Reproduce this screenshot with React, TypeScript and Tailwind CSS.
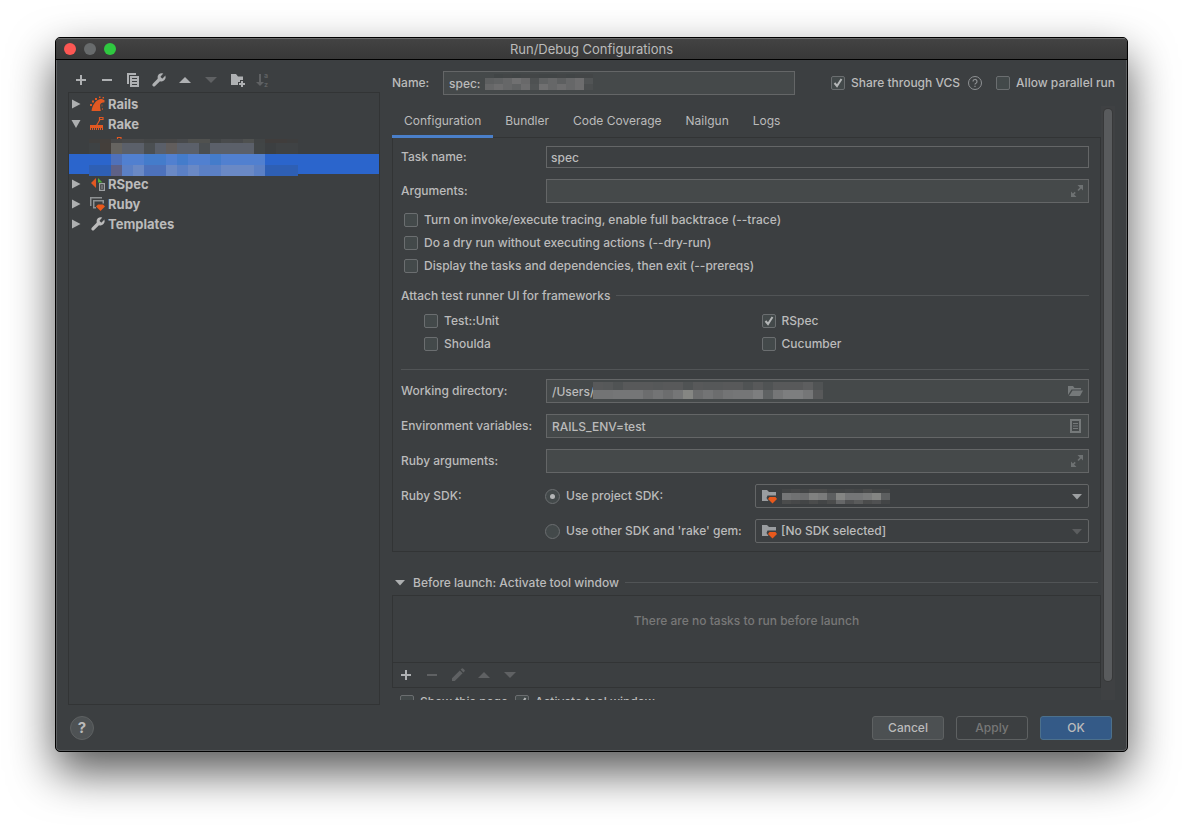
import React from "react";

type IconProps = { className?: string };

const Icon = ({ className = "", children }: IconProps & { children: React.ReactNode }) => (
  <svg viewBox="0 0 16 16" className={`size-4 shrink-0 overflow-visible ${className}`} fill="currentColor" aria-hidden="true">
    {children}
  </svg>
);

/* Toolbar icons */
const PlusIcon = () => (
  <Icon>
    <path d="M7 3h2v4h4v2H9v4H7V9H3V7h4z" />
  </Icon>
);

const MinusIcon = () => (
  <Icon>
    <path d="M3 7h10v2H3z" />
  </Icon>
);

const CopyIcon = () => (
  <Icon>
    <path d="M2 1h9v2H4v9H2z" />
    <path fillRule="evenodd" d="M5 4h9v11H5zM7 6v1h5V6zM7 9v1h5V9zM7 12v1h5v-1z" />
  </Icon>
);

const WrenchIcon = () => (
  <svg viewBox="0 0 24 24" className="size-4 shrink-0" fill="currentColor" aria-hidden="true">
    <path d="M14.7 6.3a1 1 0 0 0 0 1.4l1.6 1.6a1 1 0 0 0 1.4 0l3.9-3.9a6.4 6.4 0 0 1-8.1 8.3l-7.3 7.3a2.4 2.4 0 0 1-3.5-3.5l7.3-7.3a6.4 6.4 0 0 1 8.5-7.9z" />
  </svg>
);

const UpIcon = () => (
  <Icon>
    <path d="M2 11l6-6 6 6z" />
  </Icon>
);

const DownIcon = () => (
  <Icon>
    <path d="M2 5h12l-6 6z" />
  </Icon>
);

const NewFolderIcon = () => (
  <Icon>
    <path d="M2 2h5l2 2.500h5V8h-3v2H9v3H2z" />
    <path d="M12 9h2v2h2v2h-2v2h-2v-2h-2v-2h2z" />
  </Icon>
);

const SortIcon = () => (
  <Icon>
    <path d="M4 2h2v8h3l-4 4-4-4h3z" />
    <text x="9" y="6" fontSize="7" fontWeight="700" fontFamily="Inter, sans-serif">a</text>
    <text x="9" y="15" fontSize="7" fontWeight="700" fontFamily="Inter, sans-serif">z</text>
  </Icon>
);

const PencilIcon = () => (
  <Icon>
    <path d="M2 11.200L9.800 3.400l2.800 2.800L4.800 14H2zM10.600 2.600l1.200-1.200q.6-.5 1.200 0l1.600 1.600q.5.6 0 1.200l-1.200 1.200z" />
  </Icon>
);

/* Tree icons */
const RailsIcon = () => (
  <Icon className="text-[#e25822]">
    <path d="M1.500 15C2.500 9 5.500 4.500 9.500 3.200c2-.6 4 .2 5.200 1.300l-.4 2c-2-.4-3.900.3-4.200 2.500-.2 2 .2 4 .8 6z" />
    <path d="M0 8h2v2H0zM2 4.500h2v2H2zM5 2h2v2H5zM9 .5h1.500V2H9zM12.500 1H14v1.500h-1.500z" />
    <path d="M11.500 8.500h1v2h-1zM12 12h1v2h-1z" opacity=".6" />
  </Icon>
);

const RakeIcon = () => (
  <Icon className="text-[#e25822]">
    <path d="M0 9h13v5h-1v-2h-1v2h-1v-2H9v2H8v-2H7v2H6v-2H5v2H4v-2H3v2H2v-2H1v2H0z" />
    <path d="M6.500 9.500L10 3.500M9.500 3.500v-2h3.500v2z" fill="none" stroke="currentColor" strokeWidth="1.200" />
  </Icon>
);

const RSpecIcon = () => (
  <Icon>
    <path d="M6 2v10L1 7z" fill="#e25822" />
    <path d="M8 2l4.500 4.500H8z" fill="#4fb03a" />
    <path fillRule="evenodd" d="M9 7h6v8H9zM10.200 8.200v5.600h3.600V8.200z" fill="#9da0a2" />
    <path d="M11 9.500h2v1h-2zM11 11.500h2v1h-2z" fill="#9da0a2" />
  </Icon>
);

const RubyIcon = () => (
  <Icon className="text-[#8e9294]">
    <path d="M0 1h12v1.500H1.500V10H0z" />
    <path d="M3 4h11v3.500h-1.500v-2h-8V11H6v1.500H3z" />
    <path d="M8 8.500h5l2 2-4.500 4.500L6 10.500z" fill="#e8591c" />
  </Icon>
);

const SdkIcon = () => (
  <Icon className="text-[#9a9da0]">
    <path d="M1 2h5l2 2h7v3.500H6.500L5.500 10l2 3H1z" />
    <path d="M8.500 9h6l1.500 2-4.500 4.500L7 11z" fill="#e8591c" />
  </Icon>
);

/* Field icons */
const ExpandIcon = () => (
  <Icon className="text-[#6e7273]">
    <path d="M9.500 2H15v5.500l-1.900-1.900-2.500 2.500-1.200-1.200 2.500-2.500zM8.500 14H3V8.500l1.900 1.900 1.700-1.700 1.200 1.200-1.700 1.700z" />
  </Icon>
);

const OpenFolderIcon = () => (
  <Icon className="text-[#75797a]">
    <path d="M0 3h5l1.500 2H13v1.500H3.500L0 12z" />
    <path d="M4.500 7.500H15L12 13H1z" />
  </Icon>
);

const ListIcon = () => (
  <Icon className="text-[#75797a]">
    <path fillRule="evenodd" d="M2 1h11v14H2zM4 3v10h7V3z" />
    <path d="M5 5h5v1H5zM5 7.500h5v1H5zM5 10h5v1H5z" />
  </Icon>
);

/* Pixelated cover for private names. Each row is a height and its cell colours. */
type MosaicRow = { height: number; cells: string[] };

const Mosaic = ({ cell, rows, className = "" }: { cell: number; rows: MosaicRow[]; className?: string }) => {
  let y = 0;
  const width = cell * Math.max(...rows.map((row) => row.cells.length));
  const height = rows.reduce((sum, row) => sum + row.height, 0);
  return (
    <svg
      width={width}
      height={height}
      shapeRendering="crispEdges"
      aria-hidden="true"
      className={`pointer-events-none absolute ${className}`}
    >
      {rows.map((row, r) => {
        const top = y;
        y += row.height;
        return row.cells.map((fill, c) =>
          fill === "" ? null : (
            <rect key={`${r}-${c}`} x={c * cell} y={top} width={cell} height={row.height} fill={fill} />
          )
        );
      })}
    </svg>
  );
};

const treeMosaic: MosaicRow[] = [
  {
    height: 4,
    cells: ["", "#403f3e", "#433f3c", "#474747", "#48494a", "#48494a", "#444647", "#454748", "#474747", "#484a4c", "#50514f", "#50514f", "#424546", "#494b4d", "#484a4c", "#4f5150", "#414445", "#403d3c", "#403d3c", "#3e3e3e"],
  },
  {
    height: 11,
    cells: ["", "#3e4244", "#443f3b", "#666460", "#5b606a", "#5b606a", "#4b4f52", "#5a5f69", "#615d5c", "#5b606a", "#5b606a", "#4a4e51", "#5b606a", "#5b606a", "#5b606a", "#5b606a", "#414546", "#3c3f41", "#3f4244", "#3f4244"],
  },
  {
    height: 11,
    cells: ["", "", "", "#4f71ba", "#5180d0", "#5180d0", "#447ccb", "#447ccb", "#5180d0", "#447ccb", "#5180d0", "#5180d0", "#447ccb", "#5180d0", "#5180d0", "#5180d0", "#5180d0", "", "", ""],
  },
  {
    height: 11,
    cells: ["", "#2e5fb4", "#2e5fb4", "#5e6187", "#5b80c5", "#6a89c5", "#4d72bc", "#4d72bc", "#6a89c5", "#5b80c5", "#6a89c5", "#5b80c5", "#5b80c5", "#6a89c5", "#6a89c5", "#6a89c5", "#5b80c5", "#2e5fb4", "#2e5fb4", "#2e5fb4"],
  },
];

const nameMosaic: MosaicRow[] = [
  { height: 4, cells: ["", "#414546", "#434647", "#414546", "#434647", "#434647", "#414546", "#414546", "#434647", "#414546", "#434647", "#434647"] },
  { height: 6, cells: ["#5d5f60", "#606263", "#666768", "#707071", "#69696a", "#4e5152", "#606263", "#666768", "#5d5f60", "#666768", "#6d6d6e", "#515455"] },
  { height: 6, cells: ["#666768", "#6d6d6e", "#666768", "#606263", "#6d6d6e", "#515455", "#707071", "#666768", "#6d6d6e", "#666768", "#6d6d6e", "#4b4e4f"] },
];

const pathMosaic: MosaicRow[] = [
  { height: 8, cells: ["#58595a", "#565859", "#505354", "#58595a", "#58595a", "#58595a", "#565859", "#58595a", "#58595a", "#505354", "#58595a", "#565859", "#565859", "#58595a", "#58595a", "#505354", "#58595a", "#505354", "#58595a", "#58595a", "#58595a", "#5d5e5f", "#505354"] },
  { height: 9, cells: ["#737475", "#737475", "#757677", "#757677", "#757677", "#6c6d6e", "#737475", "#6c6d6e", "#757677", "#858683", "#6c6d6e", "#737475", "#6c6d6e", "#737475", "#757677", "#757677", "#7d7e7f", "#5f6263", "#757677", "#7d7e7f", "#7d7e7f", "#757677", "#58595a"] },
];

const sdkMosaic: MosaicRow[] = [
  { height: 4, cells: ["#434546", "#474849", "#434546", "#4b4c4c", "#4b4c4c", "#434546", "#434546", "#454748", "#434546", "#4b4c4c", "#434546", "#434546"] },
  { height: 7, cells: ["#757677", "#707172", "#6d6e6f", "#808180", "#7a7b7b", "#5d5f60", "#848583", "#757677", "#757677", "#7a7b7b", "#848583", "#5d5f60"] },
  { height: 4, cells: ["#4b4c4c", "#474849", "#434546", "#4b4c4c", "#434546", "#4b4c4c", "#666768", "#505152", "#5a5b5b", "#4b4c4c", "#505152", "#434546"] },
];

const Checkbox = ({ label, checked = false, className = "" }: { label: string; checked?: boolean; className?: string }) => (
  <label className={`flex items-center gap-1.5 whitespace-nowrap ${className}`}>
    <span className="relative size-3.5 shrink-0">
      <input
        type="checkbox"
        defaultChecked={checked}
        className="peer block size-3.5 appearance-none rounded-xs border border-[#6b6e70] bg-[#43494a]"
      />
      <svg
        viewBox="0 0 14 14"
        className="pointer-events-none absolute inset-0 hidden size-3.5 peer-checked:block"
        fill="none"
        stroke="#b4b6b7"
        strokeWidth="2"
      >
        <path d="M3.500 7L6 10l4.500-7" />
      </svg>
    </span>
    {label}
  </label>
);

const fieldClass = "h-6 w-full border border-[#646667] bg-[#45494a] px-[5px] text-[#bbbbbb] outline-none";

type FieldProps = { id: string; label: string; value?: string; icon: React.ReactNode; children?: React.ReactNode };

const Field = ({ id, label, value = "", icon, children }: FieldProps) => (
  <div className="flex items-center">
    <label htmlFor={id} className="w-[145px] shrink-0 whitespace-nowrap">{label}</label>
    <div className="relative flex-1">
      <input id={id} defaultValue={value} className={`${fieldClass} block`} />
      {children}
      <span className="absolute inset-y-0 right-[5px] flex items-center">{icon}</span>
    </div>
  </div>
);

type SdkRowProps = { id: string; label: string; option: string; checked?: boolean; children?: React.ReactNode };

const SdkRow = ({ id, label, option, checked = false, children }: SdkRowProps) => (
  <div className="flex items-center">
    <label className="flex w-[210px] shrink-0 items-center gap-1.5 whitespace-nowrap">
      <input
        type="radio"
        name="sdk"
        defaultChecked={checked}
        className="grid size-[15px] shrink-0 appearance-none place-items-center rounded-full border border-[#6b6e70] bg-[#43494a] before:size-[5px] before:rounded-full checked:before:bg-[#b4b6b7]"
      />
      {label}
    </label>
    <div className="relative flex-1">
      <span className="pointer-events-none absolute inset-y-0 left-[6px] flex items-center">
        <SdkIcon />
      </span>
      <select
        id={id}
        aria-label={label}
        className="block h-6 w-full appearance-none rounded-xs border border-[#646667] bg-[#3c3f41] pl-[25px] text-[#bbbbbb] outline-none"
      >
        <option>{option}</option>
      </select>
      {children}
      <svg
        viewBox="0 0 10 6"
        className={`pointer-events-none absolute top-[10px] right-[7px] h-1.5 w-2.5 ${checked ? "text-[#9da0a2]" : "text-[#5b5d5f]"}`}
        fill="currentColor"
      >
        <path d="M0 0h10L5 5.500z" />
      </svg>
    </div>
  </div>
);

const TreeRow = ({ label, icon, open = false }: { label: string; icon: React.ReactNode; open?: boolean }) => (
  <li>
    <button className="flex h-5 w-full items-center pl-[2px] text-left font-bold">
      <svg viewBox="0 0 10 10" className="mr-[9px] size-2.5 text-[#adafb0]" fill="currentColor">
        <path d={open ? "M.5 1h9L5 9z" : "M1 .5L9.500 5 1 9.500z"} />
      </svg>
      {icon}
      <span className="ml-[2px]">{label}</span>
    </button>
  </li>
);

const treeTools = [
  { label: "Add", icon: <PlusIcon /> },
  { label: "Remove", icon: <MinusIcon /> },
  { label: "Copy", icon: <CopyIcon /> },
  { label: "Edit templates", icon: <WrenchIcon /> },
  { label: "Move up", icon: <UpIcon /> },
  { label: "Move down", icon: <DownIcon />, disabled: true },
  { label: "Create folder", icon: <NewFolderIcon /> },
  { label: "Sort", icon: <SortIcon />, disabled: true },
];

const taskTools = [
  { label: "Add task", icon: <PlusIcon /> },
  { label: "Remove task", icon: <MinusIcon />, disabled: true },
  { label: "Edit task", icon: <PencilIcon />, disabled: true },
  { label: "Move task up", icon: <UpIcon />, disabled: true },
  { label: "Move task down", icon: <DownIcon />, disabled: true },
];

const Toolbar = ({ tools }: { tools: { label: string; icon: React.ReactNode; disabled?: boolean }[] }) => (
  <div className="flex items-center gap-[10px] text-[#afb1b3]">
    {tools.map((tool) => (
      <button key={tool.label} aria-label={tool.label} disabled={tool.disabled} className="disabled:text-[#5f6163]">
        {tool.icon}
      </button>
    ))}
  </div>
);

const tabs = ["Configuration", "Bundler", "Code Coverage", "Nailgun", "Logs"];

const Sidebar = () => (
  <aside className="flex w-78 shrink-0 flex-col pt-3">
    <div className="pl-[5px]">
      <Toolbar tools={treeTools} />
    </div>
    <ul className="mt-1 flex-1 border border-[#323435] pt-px text-[13px]">
      <TreeRow label="Rails" icon={<RailsIcon />} />
      <TreeRow label="Rake" icon={<RakeIcon />} open />
      <li className="relative flex h-5 items-center pl-[39px]">
        <RakeIcon />
        <Mosaic cell={11} rows={treeMosaic} className="top-[5px] left-[9px] z-10" />
      </li>
      <li className="h-5 bg-[#2b65cc]" />
      <TreeRow label="RSpec" icon={<RSpecIcon />} />
      <TreeRow label="Ruby" icon={<RubyIcon />} />
      <TreeRow label="Templates" icon={<WrenchIcon />} />
    </ul>
  </aside>
);

const ConfigurationPanel = () => (
  <section className="border border-[#323435] pt-2 pr-[11px] pb-2 pl-2">
    <div className="flex items-center">
      <label htmlFor="task" className="w-[145px] shrink-0">Task name:</label>
      <input
        id="task"
        defaultValue="spec"
        className="h-[22px] min-w-0 flex-1 border border-[#646667] bg-transparent px-1 text-[#bbbbbb] outline-none"
      />
    </div>
    <div className="mt-[11px]">
      <Field id="arguments" label="Arguments:" icon={<ExpandIcon />} />
    </div>

    <div className="mt-[5px] pl-[3px]">
      <Checkbox label="Turn on invoke/execute tracing, enable full backtrace (--trace)" className="h-[23px]" />
      <Checkbox label="Do a dry run without executing actions (--dry-run)" className="h-[23px]" />
      <Checkbox label="Display the tasks and dependencies, then exit (--prereqs)" className="h-[23px]" />
    </div>

    <fieldset className="pt-[10px]">
      <legend className="contents">
        <span className="flex h-[17px] items-center gap-1.5">
          Attach test runner UI for frameworks
          <span className="h-px flex-1 bg-[#515456]" />
        </span>
      </legend>
      <div className="mt-[5px] grid grid-cols-2 pl-[23px]">
        <Checkbox label="Test::Unit" className="h-[23px]" />
        <Checkbox label="RSpec" checked className="h-[23px] pl-[5px]" />
        <Checkbox label="Shoulda" className="h-[23px]" />
        <Checkbox label="Cucumber" className="h-[23px] pl-[5px]" />
      </div>
    </fieldset>
    <hr className="mt-[14px] border-[#515456]" />

    <div className="mt-[9px] flex flex-col gap-[11px]">
      <Field id="directory" label="Working directory:" value="/Users/" icon={<OpenFolderIcon />}>
        <Mosaic cell={10} rows={pathMosaic} className="top-[3px] left-[47px]" />
      </Field>
      <Field id="env" label="Environment variables:" value="RAILS_ENV=test" icon={<ListIcon />} />
      <Field id="ruby-arguments" label="Ruby arguments:" icon={<ExpandIcon />} />
      <div className="flex">
        <span className="flex h-6 w-[144px] shrink-0 items-center">Ruby SDK:</span>
        <div className="flex flex-1 flex-col gap-[11px]">
          <SdkRow id="project-sdk" label="Use project SDK:" option="" checked>
            <Mosaic cell={9} rows={sdkMosaic} className="top-[5px] left-[27px]" />
          </SdkRow>
          <SdkRow id="other-sdk" label="Use other SDK and 'rake' gem:" option="[No SDK selected]" />
        </div>
      </div>
    </div>
  </section>
);

const BeforeLaunch = () => (
  <section>
    <h2 className="mt-[22px] flex h-[17px] items-center pr-[3px] pl-[3px]">
      <svg viewBox="0 0 10 6" className="h-1.5 w-2.5 text-[#adafb0]" fill="currentColor">
        <path d="M0 0h10L5 5.500z" />
      </svg>
      <span className="ml-2">Before launch: Activate tool window</span>
      <span className="ml-1.5 h-px flex-1 bg-[#515456]" />
    </h2>
    <div className="mt-1 border border-[#323435]">
      <p className="flex h-[66px] justify-center pt-[17px] leading-4 text-[#787878]">
        There are no tasks to run before launch
      </p>
      <div className="flex h-[25px] items-center border-t border-[#323435] pl-[5px]">
        <Toolbar tools={taskTools} />
      </div>
    </div>
    <div className="mt-[3px] flex h-[22px] items-center gap-[7px] pl-2">
      <Checkbox label="Show this page" />
      <Checkbox label="Activate tool window" checked />
    </div>
  </section>
);

export default function App() {
  return (
    <div className="flex h-screen min-h-[640px] bg-white px-[55px] pt-[37px] pb-[73px] font-['Inter',sans-serif] text-[12px] leading-4 font-medium text-[#bbbbbb]">
      <main className="flex min-w-0 flex-1 flex-col overflow-hidden rounded-[5px] border border-black bg-[#3c3f41] shadow-[0_20px_45px_rgba(0,0,0,0.66),inset_0_0_0_1px_#5c5e60]">
        {/* Title bar */}
        <header className="grid h-[22px] shrink-0 grid-cols-[1fr_auto_1fr] items-center border-t border-b border-t-[#6a6a6a] border-b-black bg-linear-to-b from-[#434343] to-[#383838] px-2">
          <div className="flex gap-2">
            <button aria-label="Close" className="size-3 rounded-full bg-[#fc5753]" />
            <button aria-label="Minimize" disabled className="size-3 rounded-full bg-[#686b6c]" />
            <button aria-label="Zoom" className="size-3 rounded-full bg-[#2fc840]" />
          </div>
          <h1 className="text-[13px] font-normal">Run/Debug Configurations</h1>
        </header>

        <div className="flex min-h-0 flex-1 gap-3 px-3">
          <Sidebar />

          <div className="flex min-w-0 flex-1 flex-col pt-[11px] pb-[5px]">
            <div className="flex items-center">
              <label htmlFor="name" className="w-[51px] shrink-0">Name:</label>
              <div className="relative mr-9 flex-1">
                <input id="name" defaultValue="spec:" className={`${fieldClass} block`} />
                <Mosaic cell={9} rows={nameMosaic} className="top-[3px] left-[42px]" />
              </div>
              <Checkbox label="Share through VCS" checked />
              <svg viewBox="0 0 14 14" className="mr-[14px] ml-2 size-3.5" fill="none" stroke="#8f9193">
                <circle cx="7" cy="7" r="6.500" />
                <path d="M5 5.500a2 2 0 1 1 3 1.700q-1 .5-1 1.300M7 9.800V11" strokeWidth="1.200" />
              </svg>
              <Checkbox label="Allow parallel run" />
            </div>

            <div className="mt-[11px] flex min-h-0 flex-1 overflow-hidden">
              <div className="min-w-0 flex-1">
                <nav role="tablist" className="relative -mb-px flex h-8">
                  {tabs.map((tab, index) => (
                    <button
                      key={tab}
                      role="tab"
                      aria-selected={index === 0}
                      className="border-b-3 border-transparent px-3 font-normal aria-selected:border-[#4a7fc9]"
                    >
                      {tab}
                    </button>
                  ))}
                </nav>
                <ConfigurationPanel />
                <BeforeLaunch />
              </div>
              <div className="flex w-3.5 shrink-0 flex-col bg-[#3f4143] px-[3px] pt-[3px] pb-[19px]">
                <div className="w-2 flex-1 rounded-full bg-[#595b5d] ring-1 ring-[#38393a]" />
              </div>
            </div>
          </div>
        </div>

        {/* Footer */}
        <footer className="mt-[11px] flex h-[35px] shrink-0 items-start gap-3 pr-[15px] pl-[14px]">
          <button
            aria-label="Help"
            className="mr-auto size-6 rounded-full border border-[#5e6162] bg-[#4e5254] text-[15px] font-bold"
          >
            ?
          </button>
          <button className="h-6 w-18 rounded-[3px] border border-[#5e6162] bg-[#4c5052]">Cancel</button>
          <button disabled className="h-6 w-18 rounded-[3px] border border-[#5e6162] text-[#777777]">Apply</button>
          <button className="h-6 w-18 rounded-[3px] border border-[#4c708c] bg-[#345a87]">OK</button>
        </footer>
      </main>
    </div>
  );
}
